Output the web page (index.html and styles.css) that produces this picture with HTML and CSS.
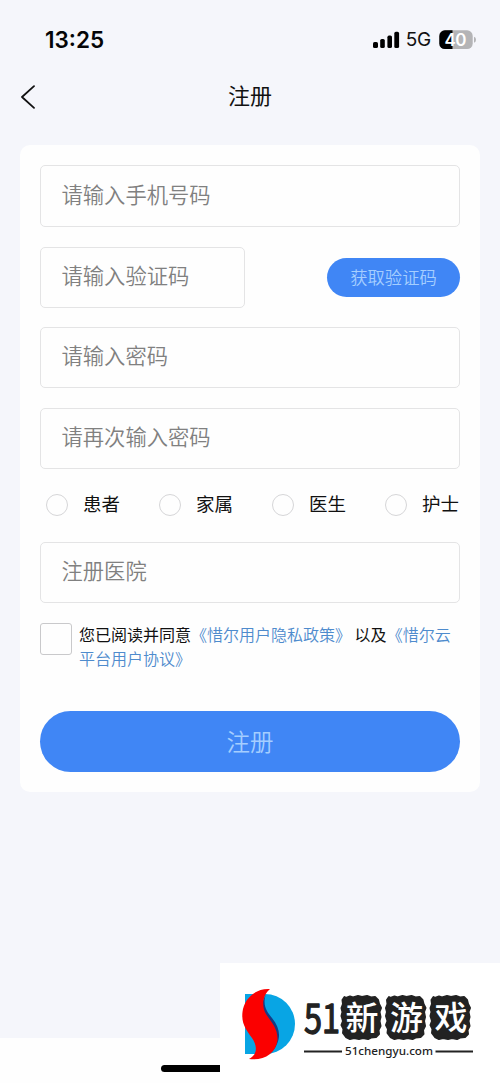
FILE: index.html
```html
<!DOCTYPE html>
<html lang="zh-CN">
<head>
<meta charset="utf-8">
<meta name="viewport" content="width=device-width, initial-scale=1">
<title>注册</title>
<link rel="stylesheet" href="styles.css">
</head>
<body>
<div class="screen">
  <div class="status">
    <span class="time">13:25</span>
    <div class="indicators">
      <svg class="signal" width="27" height="18" viewBox="0 0 27 18"><rect x="0" y="11" width="5" height="6" rx="1.6"/><rect x="7.2" y="8" width="4.6" height="9" rx="1.6"/><rect x="14.4" y="4.6" width="4.6" height="12.4" rx="1.6"/><rect x="21.3" y="0.8" width="4.8" height="16.2" rx="1.6"/></svg>
      <span class="network">5G</span>
      <svg class="battery" width="38" height="20" viewBox="0 0 38 20">
        <clipPath id="cell"><rect x="0.3" y="0.3" width="33.4" height="18.8" rx="5.6"/></clipPath>
        <g clip-path="url(#cell)"><rect width="34" height="20" fill="#b4b4b6"/><rect width="13.5" height="20" fill="#000"/></g>
        <path d="M35 6.7q2 .7 2 3t-2 3z" fill="#b4b4b6"/>
        <text class="level" x="16.4" y="15.6" text-anchor="middle" textLength="22">40</text>
      </svg>
    </div>
  </div>
  <header class="nav">
    <svg class="back" width="16" height="24" viewBox="0 0 16 24"><path d="M14 1.2 2 12l12 10.8"/></svg>
    <h1 class="title">注册</h1>
  </header>
  <form class="card">
    <div class="field field-phone">请输入手机号码</div>
    <div class="code-row">
      <div class="field field-code">请输入验证码</div>
      <button class="send" type="button">获取验证码</button>
    </div>
    <div class="field">请输入密码</div>
    <div class="field">请再次输入密码</div>
    <div class="roles">
      <label class="role"><i class="dot"></i><span class="role-name">患者</span></label>
      <label class="role"><i class="dot"></i><span class="role-name">家属</span></label>
      <label class="role"><i class="dot"></i><span class="role-name">医生</span></label>
      <label class="role"><i class="dot"></i><span class="role-name">护士</span></label>
    </div>
    <div class="field">注册医院</div>
    <div class="agree">
      <i class="check"></i>
      <p class="terms">您已阅读并同意<a class="link">《惜尔用户隐私政策》</a> 以及<a class="link">《惜尔云平台用户协议》</a></p>
    </div>
    <button class="submit" type="button">注册</button>
  </form>
</div>
<footer class="home"><div class="home-bar"></div></footer>
<aside class="brand">
  <svg width="280" height="120" viewBox="0 0 280 120">
    <path d="M25 31H45A30 30 0 0 1 45 91H25Z" fill="#08a5e4"/>
    <path d="M46 31C42 42 47 49 52 55C59 64 61 72 57 81Q54 88 49 91L42 91L42 40Z" fill="#163b83"/>
    <path d="M50 26C35 25 24 36 22.500 49C21 61 27 68 32 75C38 84 37 92 29 96C43 98 56 91 57.500 77C58 65 51 59 46 51C41 42 43 32 50 26Z" fill="#fb0000"/>
    <text class="brand-number" x="84" y="70" textLength="36" lengthAdjust="spacingAndGlyphs">51</text>
    <g fill="#222" stroke="#222" stroke-width="2" stroke-linejoin="round">
      <path id="seal" d="M126 35l4-1.500 3 1 5-1.500 4 1 5-1 4 1.500 4-.5 3 3 1 4 2 4-1.500 4 1 5-1 4 1 5-2 4 .5 4-3 3-5 .5-3 1.500-5-1-4 1-5-1-4 1-4-2-3-4 .5-4-2-4 1.500-4-1.500-5 1-4-1-4 1.500-4-.5-4 2-3z"/>
      <use href="#seal" x="44.500"/>
      <use href="#seal" x="89"/>
    </g>
    <g class="brand-name"><text x="142" y="67">新</text><text x="186.500" y="67">游</text><text x="231" y="67">戏</text></g>
    <path d="M84 88.500H122M215.500 88.500H253" stroke="#222" stroke-width="2"/>
    <text class="brand-url" x="125" y="92" textLength="88" lengthAdjust="spacingAndGlyphs">51chengyu.com</text>
  </svg>
</aside>
</body>
</html>
```
FILE: styles.css
```css
* { box-sizing: border-box; }
body {
  margin: 0;
  height: 1083px;
  position: relative;
  overflow: hidden;
  background: #fefefe;
  color: #111;
  font-family: "Noto Sans CJK SC", sans-serif;
}
.screen { height: 1038px; background: #f5f6fb; }
.status {
  height: 78px;
  padding: 1px 23px 0 45px;
  display: flex;
  align-items: center;
  justify-content: space-between;
}
.time { font: 600 22.5px Inter, sans-serif; color: #050507; }
.indicators { display: flex; align-items: center; }
.network { margin: 0 8px 0 6px; font: 400 19px Inter, sans-serif; letter-spacing: -.3px; color: #111; }
.level { font: 600 17px Inter, sans-serif; fill: #fff; }
.nav {
  height: 67px;
  padding: 0 20px 31px;
  display: grid;
  grid-template-columns: 16px 1fr 16px;
  align-items: center;
}
.back { margin-top: 1px; fill: none; stroke: #111; stroke-width: 1.8; stroke-linecap: round; stroke-linejoin: round; }
.title { margin: 0; padding-bottom: 3px; font-size: 22px; line-height: 33px; font-weight: 400; text-align: center; }
.card {
  height: 647px;
  margin: 0 20px;
  padding: 20px;
  display: flex;
  flex-direction: column;
  background: #fefefe;
  border-radius: 10px;
}
.field {
  height: 61px;
  flex: none;
  margin-bottom: 20px;
  padding: 0 20.5px 6px;
  display: flex;
  align-items: center;
  border: 1px solid #e4e4e5;
  border-radius: 5px;
  color: #808080;
  font-size: 21.3px;
  font-weight: 350;
}
.field-phone { height: 62px; }
.code-row { display: flex; justify-content: space-between; align-items: center; margin-bottom: 19px; }
.field-code { width: 205px; margin: 0; }
.send, .submit {
  border: 0;
  padding: 0 0 2px;
  background: #4086f5;
  color: #a5ceff;
  font-family: inherit;
  font-weight: 350;
}
.send { width: 133px; height: 39px; border-radius: 20px; font-size: 17.3px; }
.roles { height: 53px; margin: 0 1px 0 6px; flex: none; display: flex; justify-content: space-between; }
.role { height: 32px; display: flex; align-items: center; gap: 15px; }
.dot { width: 22px; height: 22px; border: 1px solid #d6d6d8; border-radius: 50%; }
.role-name { font-size: 18.5px; line-height: 24px; padding-bottom: 5px; }
.agree { display: flex; gap: 7px; height: 88px; flex: none; }
.check { width: 32px; height: 32px; flex: none; border: 1px solid #c9c9cb; border-radius: 3px; }
.terms { margin: -1px 0 0; font-size: 16px; line-height: 24px; }
.link { color: #4e8bcd; font-weight: 350; }
.submit { height: 61px; flex: none; border-radius: 31px; font-size: 23.5px; }
.home { height: 45px; display: flex; justify-content: center; padding-top: 27px; }
.home-bar { width: 178px; height: 7px; border-radius: 4px; background: #000; }
.brand { position: absolute; left: 220px; top: 963px; width: 280px; height: 120px; background: #fff; }
.brand-number { font: 400 40px "Noto Sans CJK SC", sans-serif; fill: #222; stroke: #222; stroke-width: 1.4; stroke-linejoin: round; }
.brand-name { font: 500 33px "Noto Sans CJK SC", sans-serif; fill: #fff; text-anchor: middle; }
.brand-url { font: 500 11px "Noto Sans", sans-serif; fill: #222; }
```
